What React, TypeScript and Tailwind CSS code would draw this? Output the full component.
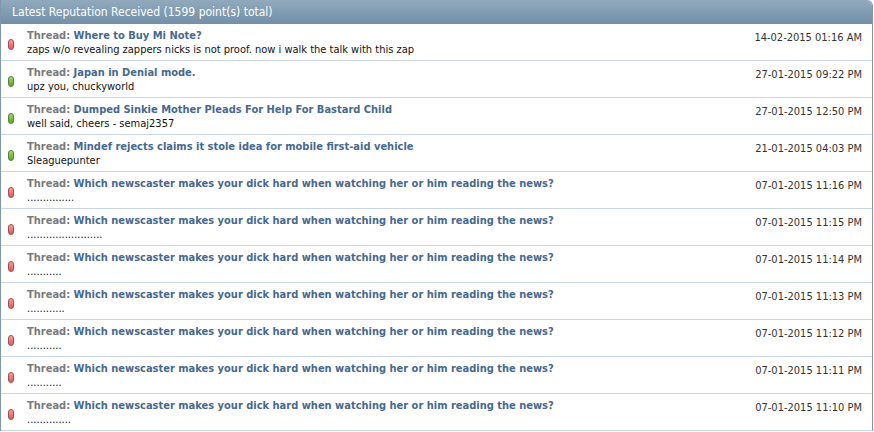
const rows = [
  { good: false, title: "Where to Buy Mi Note?", note: "zaps w/o revealing zappers nicks is not proof. now i walk the talk with this zap", date: "14-02-2015 01:16 AM" },
  { good: true, title: "Japan in Denial mode.", note: "upz you, chuckyworld", date: "27-01-2015 09:22 PM" },
  { good: true, title: "Dumped Sinkie Mother Pleads For Help For Bastard Child", note: "well said, cheers - semaj2357", date: "27-01-2015 12:50 PM" },
  { good: true, title: "Mindef rejects claims it stole idea for mobile first-aid vehicle", note: "Sleaguepunter", date: "21-01-2015 04:03 PM" },
  { good: false, title: "Which newscaster makes your dick hard when watching her or him reading the news?", note: "...............", date: "07-01-2015 11:16 PM" },
  { good: false, title: "Which newscaster makes your dick hard when watching her or him reading the news?", note: "........................", date: "07-01-2015 11:15 PM" },
  { good: false, title: "Which newscaster makes your dick hard when watching her or him reading the news?", note: "...........", date: "07-01-2015 11:14 PM" },
  { good: false, title: "Which newscaster makes your dick hard when watching her or him reading the news?", note: "............", date: "07-01-2015 11:13 PM" },
  { good: false, title: "Which newscaster makes your dick hard when watching her or him reading the news?", note: "...........", date: "07-01-2015 11:12 PM" },
  { good: false, title: "Which newscaster makes your dick hard when watching her or him reading the news?", note: "...........", date: "07-01-2015 11:11 PM" },
  { good: false, title: "Which newscaster makes your dick hard when watching her or him reading the news?", note: "..............", date: "07-01-2015 11:10 PM" },
];

const Pill = ({ good }: { good: boolean }) => (
  <span
    className={
      good
        ? "block h-[11px] w-[6px] rounded-[3px] border border-[#4d8a25] bg-gradient-to-b from-[#9edb6a] to-[#5ea32c]"
        : "block h-[11px] w-[6px] rounded-[3px] border border-[#b44848] bg-gradient-to-b from-[#f4a0a0] to-[#d65a5a]"
    }
  />
);

export default function App() {
  return (
    <div className="h-[432px] w-[874px] overflow-hidden bg-white font-['DejaVu_Sans_Condensed','DejaVu_Sans',sans-serif] text-[11px]">
      <div className="w-[873px] overflow-hidden rounded-tr-[6px] border-x border-[#8196a8]">
        <div className="flex h-[24px] items-center bg-gradient-to-b from-[#90a9bd] to-[#7290a8] pl-[11px] text-[12px] text-white">
          Latest Reputation Received (1599 point(s) total)
        </div>
        {rows.map((r, i) => (
          <div key={i} className="flex h-[37px] items-center border-b border-[#c9d6e2]">
            <div className="w-[26px] shrink-0 pl-[7px] pt-[4px]">
              <Pill good={r.good} />
            </div>
            <div className="flex-1 pt-[2px] leading-[14px]">
              <div className="font-bold">
                <span className="text-[#7a7a7a]">Thread: </span>
                <span className="text-[#46698d]">{r.title}</span>
              </div>
              <div className="text-[#111]">{r.note}</div>
            </div>
            <div className="self-start pr-[10px] pt-[6px] text-[#333]">{r.date}</div>
          </div>
        ))}
      </div>
    </div>
  );
}
